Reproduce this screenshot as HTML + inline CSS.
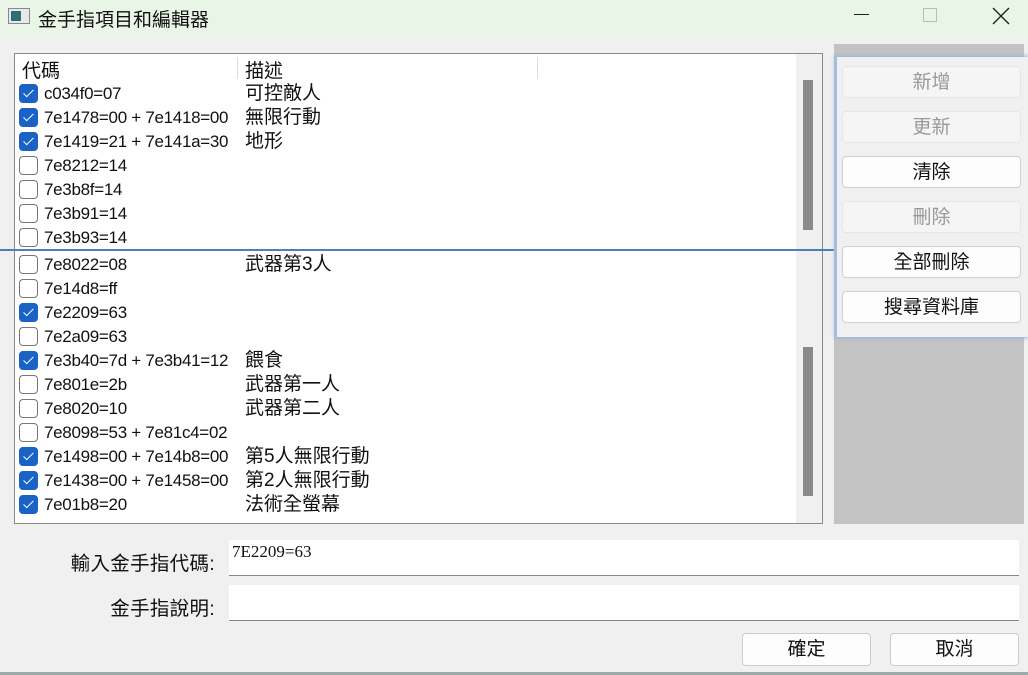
<!DOCTYPE html>
<html><head><meta charset="utf-8"><style>
*{margin:0;padding:0;box-sizing:border-box}
body{width:1028px;height:675px;overflow:hidden;background:#f0f0f0;font-family:"Liberation Sans","Noto Sans CJK TC",sans-serif;font-size:18px;color:#111;position:relative}
.a{position:absolute}
.title{left:0;top:0;width:1028px;height:38px;background:#e9f6e7}
.list{left:14px;top:53px;width:809px;height:471px;background:#fff;border:1px solid #8a8a8a}
.row{position:absolute;left:19px;height:24px;line-height:24px;white-space:nowrap}
.cb{position:absolute;left:0;top:2px;width:19px;height:19px;border:1px solid #777;border-radius:4px;background:#fff}
.cb.on{background:#1a63c6;border-color:#1a63c6}
.cb.on:after{content:"";position:absolute;left:6px;top:2px;width:4px;height:9px;border:solid #fff;border-width:0 1.5px 1.5px 0;transform:rotate(45deg)}
.code{position:absolute;left:25px;top:0;font-size:17px;letter-spacing:-0.3px}
.desc{position:absolute;left:226px;top:0;font-size:19px}
.btn{position:absolute;left:842px;width:179px;height:32px;background:#fdfdfd;border:1px solid #d0d0d0;border-radius:4px;text-align:center;line-height:31px;font-size:19px}
.btn.dis{background:#f5f5f5;color:#999;border-color:#e6e6e6}
.inp{position:absolute;left:229px;width:790px;height:36px;background:#fff;border-bottom:1px solid #888}
.lbl{position:absolute;right:813px;white-space:nowrap;font-size:19.5px;letter-spacing:0.3px}
.bb{position:absolute;top:633px;width:129px;height:33px;background:#fdfdfd;border:1px solid #ccc;border-radius:4px;text-align:center;line-height:32px;font-size:19px}
</style></head><body>
<div class="a title"></div>
<div class="a" style="left:8px;top:8px;width:22px;height:16px;border:1px solid #888;background:#e8e8e8"><div style="position:absolute;left:2px;top:2px;width:10px;height:10px;background:#2c6e78"></div></div>
<div class="a" style="left:38px;top:5px;font-size:19px">金手指項目和編輯器</div>
<div class="a" style="left:854px;top:14px;width:15px;height:1px;background:#222"></div>
<div class="a" style="left:923px;top:8px;width:14px;height:14px;border:1px solid #bbb"></div>
<svg class="a" style="left:992px;top:7px" width="18" height="18"><path d="M1 1L17 17M17 1L1 17" stroke="#222" stroke-width="1.4"/></svg>

<div class="a list"></div>
<div class="a" style="left:796px;top:54px;width:26px;height:469px;background:#f0f0f0"></div>
<div class="a" style="left:803px;top:80px;width:10px;height:150px;background:#8a8a8a"></div>
<div class="a" style="left:803px;top:347px;width:10px;height:149px;background:#8a8a8a"></div>
<div class="a" style="left:237px;top:57px;width:1px;height:22px;background:#ddd"></div>
<div class="a" style="left:537px;top:57px;width:1px;height:22px;background:#ddd"></div>
<div class="a" style="left:22px;top:56px;font-size:19px">代碼</div>
<div class="a" style="left:245px;top:56px;font-size:19px">描述</div>

<div class="row" style="top:82px"><div class="cb on"></div><span class="code">c034f0=07</span><span class="desc">可控敵人</span></div>
<div class="row" style="top:106px"><div class="cb on"></div><span class="code">7e1478=00 + 7e1418=00</span><span class="desc">無限行動</span></div>
<div class="row" style="top:130px"><div class="cb on"></div><span class="code">7e1419=21 + 7e141a=30</span><span class="desc">地形</span></div>
<div class="row" style="top:154px"><div class="cb"></div><span class="code">7e8212=14</span></div>
<div class="row" style="top:178px"><div class="cb"></div><span class="code">7e3b8f=14</span></div>
<div class="row" style="top:202px"><div class="cb"></div><span class="code">7e3b91=14</span></div>
<div class="row" style="top:226px"><div class="cb"></div><span class="code">7e3b93=14</span></div>
<div class="a" style="left:0;top:249px;width:836px;height:2px;background:#4a7fc0"></div>
<div class="row" style="top:253px"><div class="cb"></div><span class="code">7e8022=08</span><span class="desc">武器第3人</span></div>
<div class="row" style="top:277px"><div class="cb"></div><span class="code">7e14d8=ff</span></div>
<div class="row" style="top:301px"><div class="cb on"></div><span class="code">7e2209=63</span></div>
<div class="row" style="top:325px"><div class="cb"></div><span class="code">7e2a09=63</span></div>
<div class="row" style="top:349px"><div class="cb on"></div><span class="code">7e3b40=7d + 7e3b41=12</span><span class="desc">餵食</span></div>
<div class="row" style="top:373px"><div class="cb"></div><span class="code">7e801e=2b</span><span class="desc">武器第一人</span></div>
<div class="row" style="top:397px"><div class="cb"></div><span class="code">7e8020=10</span><span class="desc">武器第二人</span></div>
<div class="row" style="top:421px"><div class="cb"></div><span class="code">7e8098=53 + 7e81c4=02</span></div>
<div class="row" style="top:445px"><div class="cb on"></div><span class="code">7e1498=00 + 7e14b8=00</span><span class="desc">第5人無限行動</span></div>
<div class="row" style="top:469px"><div class="cb on"></div><span class="code">7e1438=00 + 7e1458=00</span><span class="desc">第2人無限行動</span></div>
<div class="row" style="top:493px"><div class="cb on"></div><span class="code">7e01b8=20</span><span class="desc">法術全螢幕</span></div>

<div class="a" style="left:834px;top:44px;width:190px;height:480px;background:#c3c3c3"></div>
<div class="a" style="left:836px;top:57px;width:192px;height:280px;background:#f0f0f0;box-shadow:0 0 4px 1px #8fb4e0;border-left:1px solid #9cc0e8"></div>
<div class="btn dis" style="top:66px">新增</div>
<div class="btn dis" style="top:111px">更新</div>
<div class="btn" style="top:156px">清除</div>
<div class="btn dis" style="top:201px">刪除</div>
<div class="btn" style="top:246px">全部刪除</div>
<div class="btn" style="top:291px">搜尋資料庫</div>

<div class="lbl" style="top:547px">輸入金手指代碼:</div>
<div class="lbl" style="top:592px">金手指說明:</div>
<div class="inp" style="top:540px"><span style="position:absolute;left:3px;top:2px;font-family:'Liberation Serif',serif;font-size:17px">7E2209=63</span></div>
<div class="inp" style="top:585px"></div>
<div class="bb" style="left:742px">確定</div>
<div class="bb" style="left:890px">取消</div>
<div class="a" style="left:0;top:672px;width:1028px;height:3px;background:#9aaba8"></div>
</body></html>
